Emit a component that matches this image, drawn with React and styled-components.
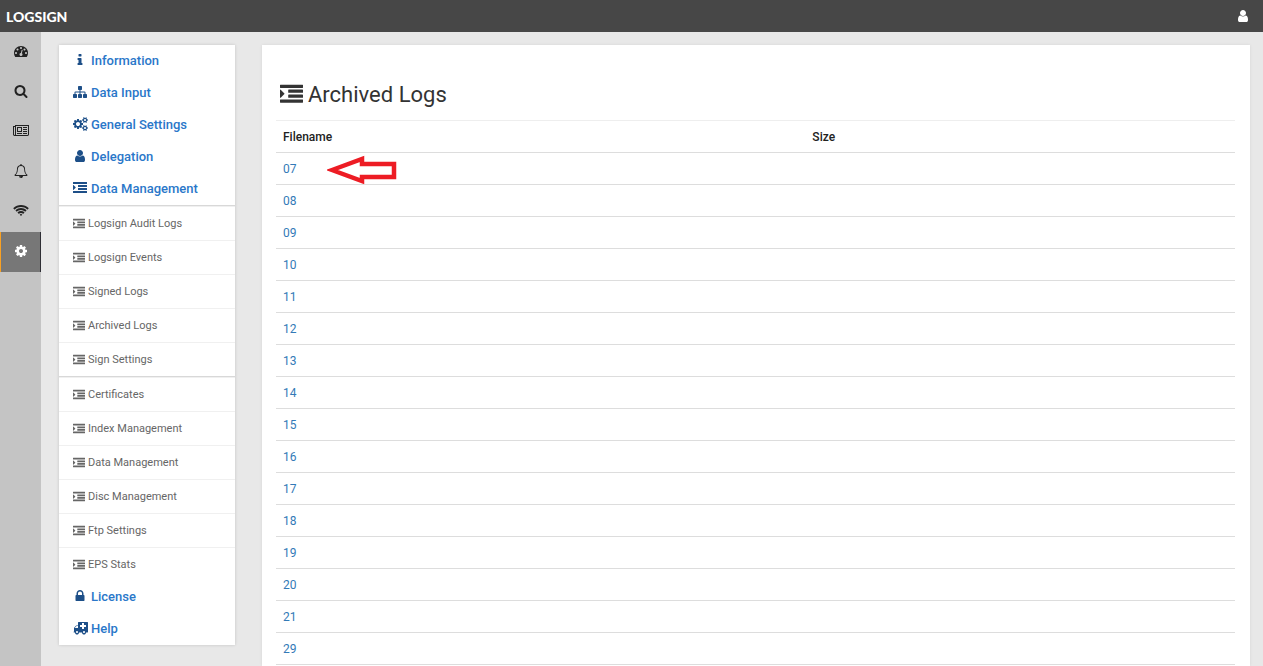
import styled, { createGlobalStyle } from "styled-components";

const ICONS = {
  dashboard:
    "M384 1152q0-53-37.5-90.5t-90.5-37.5-90.5 37.5-37.5 90.5 37.5 90.5 90.5 37.5 90.5-37.5 37.5-90.5zm192-448q0-53-37.5-90.5t-90.5-37.5-90.5 37.5-37.5 90.5 37.5 90.5 90.5 37.5 90.5-37.5 37.5-90.5zm428 481l101-382q6-26-7.5-48.5t-38.5-29.5-48 6.5-30 39.5l-101 382q-60 5-107 43.5t-63 98.5q-20 77 20 146t117 89 146-20 89-117q16-60-6-117t-72-91zm660-33q0-53-37.5-90.5t-90.5-37.5-90.5 37.5-37.5 90.5 37.5 90.5 90.5 37.5 90.5-37.5 37.5-90.5zm-640-640q0-53-37.5-90.5t-90.5-37.5-90.5 37.5-37.5 90.5 37.5 90.5 90.5 37.5 90.5-37.5 37.5-90.5zm448 192q0-53-37.5-90.5t-90.5-37.5-90.5 37.5-37.5 90.5 37.5 90.5 90.5 37.5 90.5-37.5 37.5-90.5zm320 448q0 261-141 483-19 29-54 29h-1402q-35 0-54-29-141-221-141-483 0-182 71-348t191-286 286-191 348-71 348 71 286 191 191 286 71 348z",
  search:
    "M1216 832q0-185-131.5-316.5t-316.5-131.5-316.5 131.5-131.5 316.5 131.5 316.5 316.5 131.5 316.5-131.5 131.5-316.5zm512 832q0 52-38 90t-90 38q-54 0-90-38l-343-342q-179 124-399 124-143 0-273.5-55.5t-225-150-150-225-55.5-273.5 55.5-273.5 150-225 225-150 273.5-55.5 273.5 55.5 225 150 150 225 55.5 273.5q0 220-124 399l343 343q37 37 37 90z",
  newspaper:
    "M1024 512h-384v384h384v-384zm128 640v128h-640v-128h640zm0-768v640h-640v-640h640zm640 768v128h-512v-128h512zm0-256v128h-512v-128h512zm0-256v128h-512v-128h512zm0-256v128h-512v-128h512zm-1536 960v-960h-128v960q0 26 19 45t45 19 45-19 19-45zm1664 0v-1088h-1536v1088q0 33-11 64h1483q26 0 45-19t19-45zm128-1216v1216q0 80-56 136t-136 56h-1664q-80 0-136-56t-56-136v-1088h256v-128h1792z",
  bell: "M912 1696q0-16-16-16-59 0-101.5-42.5t-42.5-101.5q0-16-16-16t-16 16q0 73 51.5 124.5t124.5 51.5q16 0 16-16zm-666-288h1300q-266-300-266-832 0-51-24-105t-69-103-121.5-80.5-169.5-31.5-169.5 31.5-121.5 80.5-69 103-24 105q0 532-266 832zm1482 0q0 52-38 90t-90 38h-448q0 106-75 181t-181 75-181-75-75-181h-448q-52 0-90-38t-38-90q50-42 91-88t85-119.5 74.5-158.5 50-206 19.5-260q0-152 117-282.5t307-158.5q-8-19-8-39 0-40 28-68t68-28 68 28 28 68q0 20-8 39 190 28 307 158.5t117 282.5q0 139 19.5 260t50 206 74.5 158.5 85 119.5 91 88z",
  wifi: "M1024 1523q-20 0-93-73.5t-73-93.5q0-32 62.5-54t103.5-22 103.5 22 62.5 54q0 20-73 93.5t-93 73.5zm270-271q-2 0-40-25t-101.5-50-128.5-25-128.5 25-101 50-40.5 25q-18 0-93.5-75t-75.5-93q0-13 10-23 78-77 196-121t233-44 233 44 196 121q10 10 10 23 0 18-75.5 93t-93.5 75zm273-272q-11 0-23-8-136-105-252-154.5t-268-49.5q-85 0-170.5 22t-149 53-113.5 62-79 53-31 22q-17 0-92-75t-75-93q0-12 10-22 132-132 320-205t380-73 380 73 320 205q10 10 10 22 0 18-75 93t-92 75zm271-271q-11 0-22-9-179-157-371.5-236.5t-420.5-79.5-420.5 79.5-371.5 236.5q-11 9-22 9-17 0-92.5-75t-75.5-93q0-13 10-23 187-186 445-288t527-102 527 102 445 288q10 10 10 23 0 18-75.5 93t-92.5 75z",
  cog: "M1152 896q0-106-75-181t-181-75-181 75-75 181 75 181 181 75 181-75 75-181zm512-109v222q0 12-8 23t-20 13l-185 28q-19 54-39 91 35 50 107 138 10 12 10 25t-9 23q-27 37-99 108t-94 71q-12 0-26-9l-138-108q-44 23-91 38-16 136-29 186-7 28-36 28h-222q-14 0-24.5-8.5t-11.5-21.5l-28-184q-49-16-90-37l-141 107q-10 9-25 9-14 0-25-11-126-114-165-168-7-10-7-23 0-12 8-23 15-21 51-66.5t54-70.5q-27-50-41-99l-183-27q-13-2-21-12.5t-8-23.5v-222q0-12 8-23t19-13l186-28q14-46 39-92-40-57-107-138-10-12-10-24 0-10 9-23 26-36 98.5-107.5t94.5-71.5q13 0 26 10l138 107q44-23 91-38 16-136 29-186 7-28 36-28h222q14 0 24.5 8.5t11.5 21.5l28 184q49 16 90 37l142-107q9-9 24-9 13 0 25 10 129 119 165 170 7 8 7 22 0 12-8 23-15 21-51 66.5t-54 70.5q26 50 41 98l183 28q13 2 21 12.5t8 23.5z",
  cogs: "M896 896q0-106-75-181t-181-75-181 75-75 181 75 181 181 75 181-75 75-181zm768 512q0-52-38-90t-90-38-90 38-38 90q0 53 37.5 90.5t90.5 37.5 90.5-37.5 37.5-90.5zm0-1024q0-52-38-90t-90-38-90 38-38 90q0 53 37.5 90.5t90.5 37.5 90.5-37.5 37.5-90.5zm-384 421v185q0 10-7 19.5t-16 10.5l-155 24q-11 35-32 76 34 48 90 115 7 11 7 20 0 12-7 19-23 30-82.5 89.5t-78.5 59.5q-11 0-21-7l-115-90q-37 19-77 31-11 108-23 155-7 24-30 24h-186q-11 0-20-7.5t-10-17.5l-23-153q-34-10-75-31l-118 89q-7 7-20 7-11 0-21-8-144-133-144-160 0-9 7-19 10-14 41-53t47-61q-23-44-35-82l-152-24q-10-1-17-9.5t-7-19.5v-185q0-10 7-19.5t16-10.5l155-24q11-35 32-76-34-48-90-115-7-11-7-20 0-12 7-20 22-30 82-89t79-59q11 0 21 7l115 90q34-18 77-32 11-108 23-154 7-24 30-24h186q11 0 20 7.5t10 17.5l23 153q34 10 75 31l118-89q8-7 20-7 11 0 21 8 144 133 144 160 0 8-7 19-12 16-42 54t-45 60q23 48 34 82l152 23q10 2 17 10.5t7 19.5zm640 533v140q0 16-149 31-12 27-30 52 51 113 51 138 0 4-4 7-122 71-124 71-8 0-46-47t-52-68q-20 2-30 2t-30-2q-14 21-52 68t-46 47q-2 0-124-71-4-3-4-7 0-25 51-138-18-25-30-52-149-15-149-31v-140q0-16 149-31 13-29 30-52-51-113-51-138 0-4 4-7 4-2 35-20t59-34 30-16q8 0 46 46.5t52 67.5q20-2 30-2t30 2q51-71 92-112l6-2q4 0 124 70 4 3 4 7 0 25-51 138 17 23 30 52 149 15 149 31zm0-1024v140q0 16-149 31-12 27-30 52 51 113 51 138 0 4-4 7-122 71-124 71-8 0-46-47t-52-68q-20 2-30 2t-30-2q-14 21-52 68t-46 47q-2 0-124-71-4-3-4-7 0-25 51-138-18-25-30-52-149-15-149-31v-140q0-16 149-31 13-29 30-52-51-113-51-138 0-4 4-7 4-2 35-20t59-34 30-16q8 0 46 46.5t52 67.5q20-2 30-2t30 2q51-71 92-112l6-2q4 0 124 70 4 3 4 7 0 25-51 138 17 23 30 52 149 15 149 31z",
  info: "M1216 1344v128q0 26-19 45t-45 19h-512q-26 0-45-19t-19-45v-128q0-26 19-45t45-19h64v-384h-64q-26 0-45-19t-19-45v-128q0-26 19-45t45-19h384q26 0 45 19t19 45v576h64q26 0 45 19t19 45zm-128-1152v192q0 26-19 45t-45 19h-256q-26 0-45-19t-19-45v-192q0-26 19-45t45-19h256q26 0 45 19t19 45z",
  sitemap:
    "M1792 1248v320q0 40-28 68t-68 28h-320q-40 0-68-28t-28-68v-320q0-40 28-68t68-28h96v-192h-512v192h96q40 0 68 28t28 68v320q0 40-28 68t-68 28h-320q-40 0-68-28t-28-68v-320q0-40 28-68t68-28h96v-192h-512v192h96q40 0 68 28t28 68v320q0 40-28 68t-68 28h-320q-40 0-68-28t-28-68v-320q0-40 28-68t68-28h96v-192q0-52 38-90t90-38h512v-192h-96q-40 0-68-28t-28-68v-320q0-40 28-68t68-28h320q40 0 68 28t28 68v320q0 40-28 68t-68 28h-96v192h512q52 0 90 38t38 90v192h96q40 0 68 28t28 68z",
  user: "M1536 1399q0 109-62.5 187t-150.5 78h-854q-88 0-150.5-78t-62.5-187q0-85 8.5-160.5t31.5-152 58.5-131 94-89 134.5-34.5q131 128 313 128t313-128q76 0 134.5 34.5t94 89 58.5 131 31.5 152 8.5 160.5zm-256-887q0 159-112.5 271.5t-271.5 112.5-271.5-112.5-112.5-271.5 112.5-271.5 271.5-112.5 271.5 112.5 112.5 271.5z",
  indent:
    "M352 832q0 14-9 23l-288 288q-9 9-23 9-13 0-22.5-9.5t-9.5-22.5v-576q0-13 9.5-22.5t22.5-9.5q14 0 23 9l288 288q9 9 9 23zM32 1280h1728q32 0 32 32v192q0 32-32 32h-1728q-32 0-32-32v-192q0-32 32-32zM672 896h1088q32 0 32 32v192q0 32-32 32h-1088q-32 0-32-32v-192q0-32 32-32zM672 512h1088q32 0 32 32v192q0 32-32 32h-1088q-32 0-32-32v-192q0-32 32-32zM32 128h1728q32 0 32 32v192q0 32-32 32h-1728q-32 0-32-32v-192q0-32 32-32z",
  lock: "M640 768h512v-192q0-106-75-181t-181-75-181 75-75 181v192zm832 96v576q0 40-28 68t-68 28h-960q-40 0-68-28t-28-68v-576q0-40 28-68t68-28h32v-192q0-184 132-316t316-132 316 132 132 316v192h32q40 0 68 28t28 68z",
  ambulance:
    "M640 1408q0-52-38-90t-90-38-90 38-38 90 38 90 90 38 90-38 38-90zm-384-512h384v-256h-158q-14 2-22 9l-195 195q-7 12-9 22v30zm1280 512q0-52-38-90t-90-38-90 38-38 90 38 90 90 38 90-38 38-90zm128-672v-192q0-14-9-23t-23-9h-224v-224q0-14-9-23t-23-9h-192q-14 0-23 9t-9 23v224h-224q-14 0-23 9t-9 23v192q0 14 9 23t23 9h224v224q0 14 9 23t23 9h192q14 0 23-9t9-23v-224h224q14 0 23-9t9-23zM1920 192v1216q0 26-19 45t-45 19h-192q0 106-75 181t-181 75-181-75-75-181h-384q0 106-75 181t-181 75-181-75-75-181h-128q-26 0-45-19t-19-45 19-45 45-19v-416q0-26 13-58t32-51l198-198q19-19 51-32t58-13h160v-384q0-26 19-45t45-19h1152q26 0 45 19t19 45z",
};

// view box and pixel widths of the glyphs that are wider than one em
const WIDE = {
  newspaper: [2048, 2],
  wifi: [2048, 2],
  cogs: [1920, 1],
  ambulance: [1920, 1],
};

const RAIL = [
  { icon: "dashboard", label: "Dashboard" },
  { icon: "search", label: "Search" },
  { icon: "newspaper", label: "Reports" },
  { icon: "bell", label: "Alerts" },
  { icon: "wifi", label: "Network" },
  { icon: "cog", label: "Settings", active: true },
];

const SECTIONS = [
  { icon: "info", label: "Information" },
  { icon: "sitemap", label: "Data Input" },
  { icon: "cogs", label: "General Settings" },
  { icon: "user", label: "Delegation" },
  { icon: "indent", label: "Data Management" },
];

const LOG_LINKS = [
  "Logsign Audit Logs",
  "Logsign Events",
  "Signed Logs",
  "Archived Logs",
  "Sign Settings",
];

const DATA_LINKS = [
  "Certificates",
  "Index Management",
  "Data Management",
  "Disc Management",
  "Ftp Settings",
  "EPS Stats",
];

const FOOT_SECTIONS = [
  { icon: "lock", label: "License" },
  { icon: "ambulance", label: "Help" },
];

const FILES = [
  "07", "08", "09", "10", "11", "12", "13", "14",
  "15", "16", "17", "18", "19", "20", "21", "29",
];

function Icon({ name, size = 14 }) {
  const [box, extra] = WIDE[name] || [1792, 0];
  return (
    <svg
      width={size + extra}
      height={size}
      viewBox={`0 0 ${box} 1792`}
      fill="currentColor"
      aria-hidden="true"
    >
      <path d={ICONS[name]} />
    </svg>
  );
}

function Section({ icon, label }) {
  return (
    <SectionLink href="#">
      <IconSlot>
        <Icon name={icon} />
      </IconSlot>
      {label}
    </SectionLink>
  );
}

function SubLinks({ items }) {
  return (
    <SubMenu>
      {items.map((label) => (
        <SubLink href="#" key={label}>
          <Icon name="indent" size={12} />
          {label}
        </SubLink>
      ))}
    </SubMenu>
  );
}

export default function App() {
  return (
    <Page>
      <GlobalStyle />
      <TopBar>
        <Logo href="#">LOGSIGN</Logo>
        <UserButton type="button" aria-label="Account">
          <Icon name="user" />
        </UserButton>
      </TopBar>
      <Body>
        <Rail>
          {RAIL.map(({ icon, label, active }) => (
            <RailLink href="#" key={icon} aria-label={label} $active={active}>
              <Icon name={icon} />
            </RailLink>
          ))}
        </Rail>
        <Content>
          <Sidebar>
            {SECTIONS.map((s) => (
              <Section key={s.label} {...s} />
            ))}
            <SubLinks items={LOG_LINKS} />
            <SubLinks items={DATA_LINKS} />
            {FOOT_SECTIONS.map((s) => (
              <Section key={s.label} {...s} />
            ))}
          </Sidebar>
          <Panel>
            <Title>
              <Icon name="indent" size={23} />
              Archived Logs
            </Title>
            <Table>
              <thead>
                <tr>
                  <HeadCell $width="55.2%">Filename</HeadCell>
                  <HeadCell>Size</HeadCell>
                </tr>
              </thead>
              <tbody>
                {FILES.map((file, i) => (
                  <tr key={file}>
                    <Cell>
                      <FileLink href="#">{file}</FileLink>
                      {i === 0 && (
                        <Pointer viewBox="0 0 70 30" aria-hidden="true">
                          <path d="M5 15 L35 4 V9 H67 V22 H35 V26 Z" />
                        </Pointer>
                      )}
                    </Cell>
                    <Cell />
                  </tr>
                ))}
              </tbody>
            </Table>
          </Panel>
        </Content>
      </Body>
    </Page>
  );
}

/* ——— styled-components CSS ——— */
const GlobalStyle = createGlobalStyle`
  * {
    box-sizing: border-box;
  }
  body {
    margin: 0;
    background: #e8e8e8;
    color: #333;
    font-family: Roboto, "Liberation Sans", sans-serif;
    font-size: 12px;
  }
  a {
    text-decoration: none;
  }
  svg {
    flex: none;
  }
`;

const Page = styled.div`
  display: flex;
  flex-direction: column;
  height: 100vh;
  overflow: hidden;
`;

const TopBar = styled.header`
  display: flex;
  flex: none;
  align-items: center;
  justify-content: space-between;
  height: 32px;
  padding: 0 13px 0 6px;
  background: #474747;
`;

const Logo = styled.a`
  color: #fff;
  font-family: Lato, sans-serif;
  font-size: 14px;
  font-weight: 900;
`;

const UserButton = styled.button`
  display: flex;
  padding: 0;
  border: 0;
  background: none;
  color: #fff;
`;

const Body = styled.div`
  display: flex;
  flex: 1;
  min-height: 0;
`;

const Rail = styled.nav`
  flex: none;
  width: 41px;
  background: #c4c4c4;
`;

const RailLink = styled.a`
  display: flex;
  align-items: center;
  justify-content: center;
  height: 40px;
  padding-bottom: 2px;
  border-left: 1px solid ${({ $active }) => ($active ? "#f9a123" : "transparent")};
  border-right: 1px solid ${({ $active }) => ($active ? "#2f2f35" : "transparent")};
  background: ${({ $active }) => ($active ? "#777" : "transparent")};
  color: ${({ $active }) => ($active ? "#fff" : "#222")};
`;

const Content = styled.div`
  display: flex;
  flex: 1;
  gap: 27px;
  min-width: 0;
  padding: 13px 13px 0 18px;
`;

const Sidebar = styled.nav`
  flex: none;
  align-self: flex-start;
  width: 176px;
  background: #fff;
  box-shadow: 0 0 3px rgba(0, 0, 0, 0.16);
`;

const SectionLink = styled.a`
  display: flex;
  align-items: center;
  gap: 4px;
  height: 32px;
  padding: 0 14px 2px;
  color: #2a77c9;
  font-size: 13px;
  font-weight: 500;
`;

const IconSlot = styled.span`
  display: flex;
  justify-content: center;
  width: 14px;
  color: #1d4f88;
`;

const SubMenu = styled.div`
  border-top: 1px solid #d8d8d8;
`;

const SubLink = styled.a`
  display: flex;
  align-items: center;
  gap: 3px;
  height: 34px;
  padding: 0 14px;
  border-top: 1px solid #f0f0f0;
  color: #666;
  font-size: 11px;
`;

const Panel = styled.main`
  flex: 1;
  min-width: 0;
  padding: 33px 15px 14px 14px;
  background: #fff;
  box-shadow: 0 0 3px rgba(0, 0, 0, 0.08);
`;

const Title = styled.h1`
  display: flex;
  align-items: center;
  gap: 5px;
  height: 32px;
  margin: 0 0 10px;
  padding-left: 4px;
  font-size: 22px;
  font-weight: 400;
`;

const Table = styled.table`
  width: 100%;
  border-collapse: separate;
  border-spacing: 0;
  border-bottom: 1px solid #ddd;
`;

const HeadCell = styled.th`
  width: ${({ $width }) => $width || "auto"};
  height: 32px;
  padding: 0 7px;
  border-top: 1px solid #eee;
  color: #222;
  font-size: 12px;
  font-weight: 500;
  text-align: left;
`;

const Cell = styled.td`
  position: relative;
  height: 32px;
  padding: 0 7px;
  border-top: 1px solid #ddd;
`;

const FileLink = styled.a`
  color: #337ab7;
`;

const Pointer = styled.svg`
  position: absolute;
  top: 2px;
  left: 51px;
  width: 70px;
  height: 30px;
  fill: none;
  stroke: #ed1c24;
  stroke-width: 4.5;
`;
